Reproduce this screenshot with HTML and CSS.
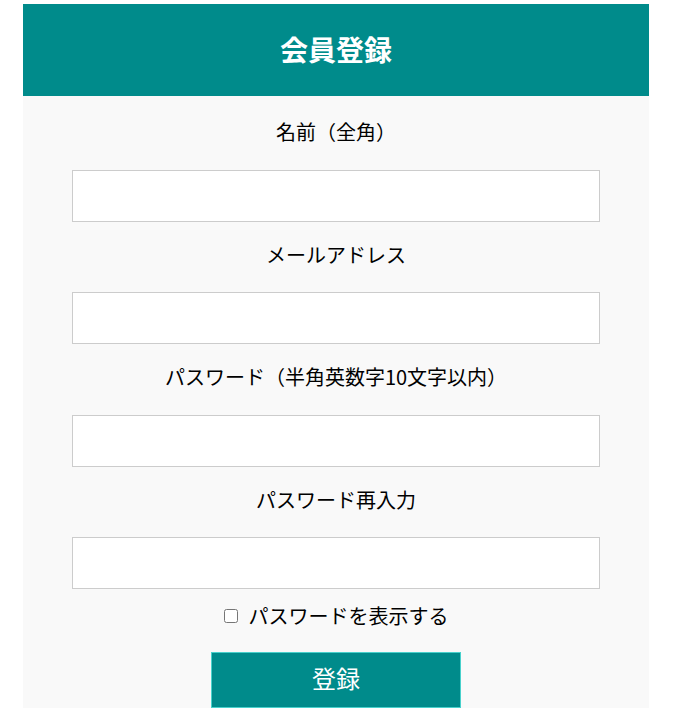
FILE: index.html
```html
<!DOCTYPE html>
<html lang="ja">
<head>
  <meta charset="UTF-8">
  <meta name="viewport" content="width=device-width, initial-scale=1.0">
  <title>会員登録</title>
  <link rel="stylesheet" href="styles.css">
</head>
<body>
  <div class="container">
    <h1 class="title">会員登録</h1>

    <form id="registerForm" class="register-form">
      <div class="form-group">
        <label for="name">名前（全角）</label>
        <input type="text" id="name">
      </div>
      <div class="form-group">
        <label for="email">メールアドレス</label>
        <input type="email" id="email">
      </div>
      <div class="form-group">
        <label for="password">パスワード（半角英数字10文字以内）</label>
        <input type="password" id="password" maxlength="10">
      </div>
      <div class="form-group">
        <label for="passwordConfirm">パスワード再入力</label>
        <input type="password" id="passwordConfirm" maxlength="10">
      </div>
      <div class="show-password">
        <input type="checkbox" id="showPassword">
        <label for="showPassword">パスワードを表示する</label>
      </div>
      <button type="submit" class="submit-button">登録</button>
    </form>
  </div>
</body>
</html>
```

FILE: styles.css
```css
body {
  margin: 0;
  font-family: "Noto Sans CJK JP", "Noto Sans", sans-serif;
  color: #000;
  background-color: #fff;
}

.container {
  width: 626px;
  margin: 4px 0 0 23px;
  background-color: #f9f9f9;
}

.title {
  margin: 0;
  height: 92px;
  line-height: 90px;
  background-color: #008b8b;
  color: #fff;
  font-size: 28px;
  font-weight: bold;
  text-align: center;
}

.register-form {
  display: flex;
  flex-direction: column;
  align-items: center;
  padding-top: 21px;
}

.form-group {
  display: flex;
  flex-direction: column;
  align-items: center;
  margin-bottom: 18px;
}

.form-group label {
  display: block;
  font-size: 20px;
  line-height: 30px;
  margin-bottom: 22.5px;
}

.form-group input {
  box-sizing: border-box;
  width: 528px;
  height: 52px;
  padding: 8px;
  border: 1px solid #ccc;
  border-radius: 0;
  background-color: #fff;
  font-size: 20px;
}

.show-password {
  display: flex;
  align-items: center;
  margin-top: -6px;
  font-size: 20px;
  line-height: 30px;
}

.show-password input {
  width: 14px;
  height: 14px;
  margin: 0 11px 0 0;
}

.submit-button {
  box-sizing: border-box;
  width: 250px;
  height: 56px;
  margin-top: 21px;
  padding: 0 0 6px;
  border: 1px solid #48d1cc;
  background-color: #008b8b;
  color: #fff;
  font-family: inherit;
  font-size: 24px;
  cursor: pointer;
}
```
